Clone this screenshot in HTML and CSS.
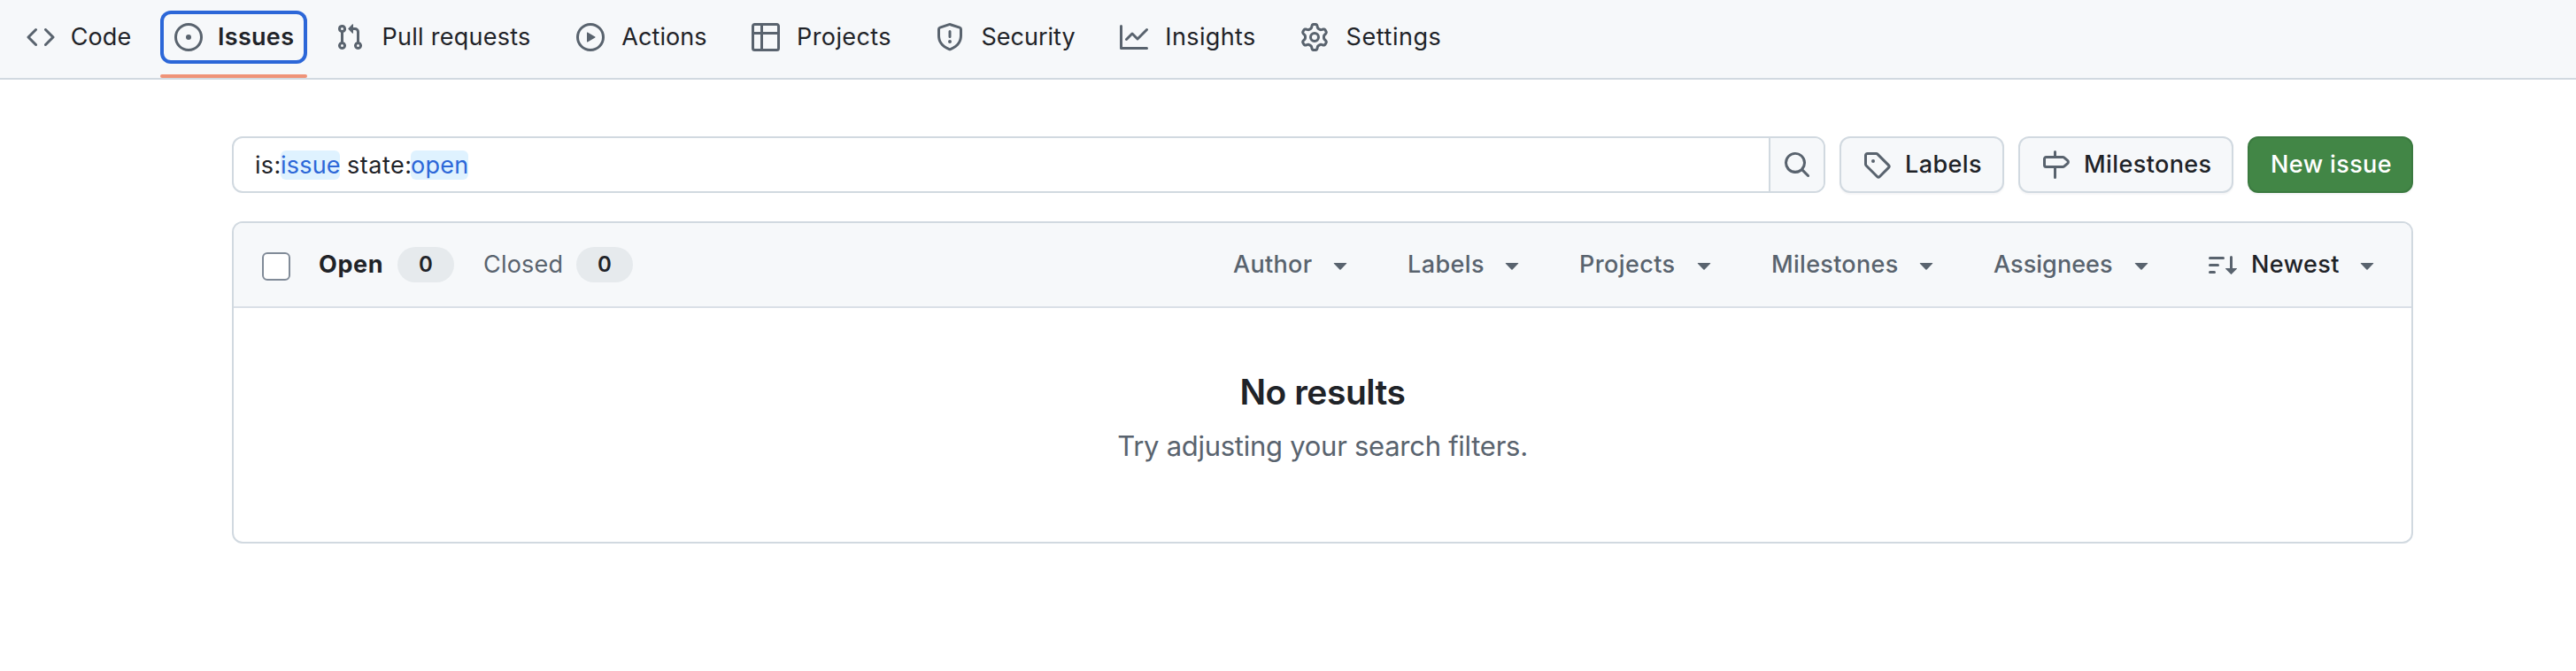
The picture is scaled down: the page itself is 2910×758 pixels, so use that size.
FILE: index.html
```html
<!DOCTYPE html>
<html lang="en">
<head>
<meta charset="utf-8">
<title>Issues</title>
<link rel="stylesheet" href="styles.css">
</head>
<body>
<nav class="repo-nav">
  <a class="tab tab-code"><svg class="icon" viewBox="0 0 16 16"><path d="m11.28 3.22 4.25 4.25a.75.75 0 0 1 0 1.06l-4.25 4.25a.749.749 0 0 1-1.275-.326.749.749 0 0 1 .215-.734L13.94 8l-3.72-3.72a.749.749 0 0 1 .326-1.275.749.749 0 0 1 .734.215Zm-6.56 0a.751.751 0 0 1 1.042.018.751.751 0 0 1 .018 1.042L2.06 8l3.72 3.72a.749.749 0 0 1-.326 1.275.749.749 0 0 1-.734-.215L.47 8.53a.75.75 0 0 1 0-1.06Z"/></svg><span class="tab-label">Code</span></a>
  <a class="tab tab-issues selected"><svg class="icon" viewBox="0 0 16 16"><path d="M8 9.5a1.5 1.5 0 1 0 0-3 1.5 1.5 0 0 0 0 3Z"/><path d="M8 0a8 8 0 1 1 0 16A8 8 0 0 1 8 0ZM1.5 8a6.5 6.5 0 1 0 13 0 6.5 6.5 0 0 0-13 0Z"/></svg><span class="tab-label">Issues</span></a>
  <a class="tab tab-pulls"><svg class="icon" viewBox="0 0 16 16"><path d="M1.5 3.25a2.25 2.25 0 1 1 3 2.122v5.256a2.251 2.251 0 1 1-1.5 0V5.372A2.25 2.25 0 0 1 1.5 3.25Zm5.677-.177L9.573.677A.25.25 0 0 1 10 .854V2.5h1A2.5 2.5 0 0 1 13.5 5v5.628a2.251 2.251 0 1 1-1.5 0V5a1 1 0 0 0-1-1h-1v1.646a.25.25 0 0 1-.427.177L7.177 3.427a.25.25 0 0 1 0-.354ZM3.75 2.5a.75.75 0 1 0 0 1.5.75.75 0 0 0 0-1.5Zm0 9.5a.75.75 0 1 0 0 1.5.75.75 0 0 0 0-1.5Zm8.25.75a.75.75 0 1 0 1.5 0 .75.75 0 0 0-1.5 0Z"/></svg><span class="tab-label">Pull requests</span></a>
  <a class="tab tab-actions"><svg class="icon" viewBox="0 0 16 16"><path d="M8 0a8 8 0 1 1 0 16A8 8 0 0 1 8 0ZM1.5 8a6.5 6.5 0 1 0 13 0 6.5 6.5 0 0 0-13 0Zm4.879-2.773 4.264 2.559a.25.25 0 0 1 0 .428l-4.264 2.559A.25.25 0 0 1 6 10.559V5.442a.25.25 0 0 1 .379-.215Z"/></svg><span class="tab-label">Actions</span></a>
  <a class="tab tab-projects"><svg class="icon" viewBox="0 0 16 16"><path d="M0 1.75C0 .784.784 0 1.75 0h12.5C15.216 0 16 .784 16 1.75v12.5A1.75 1.75 0 0 1 14.25 16H1.75A1.75 1.75 0 0 1 0 14.25ZM6.5 6.5v8h7.75a.25.25 0 0 0 .25-.25V6.5Zm8-1.5V1.75a.25.25 0 0 0-.25-.25H6.5V5Zm-13 1.5v7.75c0 .138.112.25.25.25H5v-8ZM5 5V1.5H1.75a.25.25 0 0 0-.25.25V5Z"/></svg><span class="tab-label">Projects</span></a>
  <a class="tab tab-security"><svg class="icon" viewBox="0 0 16 16"><path d="M7.467.133a1.748 1.748 0 0 1 1.066 0l5.25 1.68A1.75 1.75 0 0 1 15 3.48V7c0 1.566-.32 3.182-1.303 4.682-.983 1.498-2.585 2.813-5.032 3.855a1.697 1.697 0 0 1-1.33 0c-2.447-1.042-4.049-2.357-5.032-3.855C1.32 10.182 1 8.566 1 7V3.48a1.755 1.755 0 0 1 1.217-1.667Zm.61 1.429a.25.25 0 0 0-.153 0l-5.25 1.68a.25.25 0 0 0-.174.238V7c0 1.358.275 2.666 1.057 3.86.784 1.194 2.121 2.34 4.366 3.297a.196.196 0 0 0 .154 0c2.245-.956 3.582-2.104 4.366-3.298C13.225 9.666 13.5 8.36 13.5 7V3.48a.251.251 0 0 0-.174-.237l-5.25-1.68ZM8.75 4.75v3a.75.75 0 0 1-1.5 0v-3a.75.75 0 0 1 1.5 0ZM9 10.5a1 1 0 1 1-2 0 1 1 0 0 1 2 0Z"/></svg><span class="tab-label">Security</span></a>
  <a class="tab tab-insights"><svg class="icon" viewBox="0 0 16 16"><path d="M1.5 1.75V13.5h13.75a.75.75 0 0 1 0 1.5H.75a.75.75 0 0 1-.75-.75V1.75a.75.75 0 0 1 1.5 0Zm14.28 2.53-5.25 5.25a.75.75 0 0 1-1.06 0L7 7.06 4.28 9.78a.751.751 0 0 1-1.042-.018.751.751 0 0 1-.018-1.042l3.25-3.25a.75.75 0 0 1 1.06 0L10 7.94l4.72-4.72a.751.751 0 0 1 1.042.018.751.751 0 0 1 .018 1.042Z"/></svg><span class="tab-label">Insights</span></a>
  <a class="tab tab-settings"><svg class="icon" viewBox="0 0 16 16"><path d="M8 0a8.2 8.2 0 0 1 .701.031C9.444.095 9.99.645 10.16 1.29l.288 1.107c.018.066.079.158.212.224.231.114.454.243.668.386.123.082.233.09.299.071l1.103-.303c.644-.176 1.392.021 1.82.63.27.385.506.792.704 1.218.315.675.111 1.422-.364 1.891l-.814.806c-.049.048-.098.147-.088.294.016.257.016.515 0 .772-.01.147.038.246.088.294l.814.806c.475.469.679 1.216.364 1.891a7.977 7.977 0 0 1-.704 1.217c-.428.61-1.176.807-1.82.63l-1.102-.302c-.067-.019-.177-.011-.3.071a5.909 5.909 0 0 1-.668.386c-.133.066-.194.158-.211.224l-.29 1.106c-.168.646-.715 1.196-1.458 1.26a8.006 8.006 0 0 1-1.402 0c-.743-.064-1.289-.614-1.458-1.26l-.289-1.106c-.018-.066-.079-.158-.212-.224a5.738 5.738 0 0 1-.668-.386c-.123-.082-.233-.09-.299-.071l-1.103.303c-.644.176-1.392-.021-1.82-.63a8.12 8.12 0 0 1-.704-1.218c-.315-.675-.111-1.422.363-1.891l.815-.806c.05-.048.098-.147.088-.294a6.214 6.214 0 0 1 0-.772c.01-.147-.038-.246-.088-.294l-.815-.806C.635 6.045.431 5.298.746 4.623a7.92 7.92 0 0 1 .704-1.217c.428-.61 1.176-.807 1.82-.63l1.102.302c.067.019.177.011.3-.071.214-.143.437-.272.668-.386.133-.066.194-.158.211-.224l.29-1.106C6.009.645 6.556.095 7.299.03 7.53.01 7.764 0 8 0Zm-.571 1.525c-.036.003-.108.036-.137.146l-.289 1.105c-.147.561-.549.967-.998 1.189-.173.086-.34.183-.5.29-.417.278-.97.423-1.529.27l-1.103-.303c-.109-.03-.175.016-.195.045-.22.312-.412.644-.573.99-.014.031-.021.11.059.19l.815.806c.411.406.562.957.53 1.456a4.709 4.709 0 0 0 0 .582c.032.499-.119 1.05-.53 1.456l-.815.806c-.081.08-.073.159-.059.19.162.346.353.677.573.989.02.03.085.076.195.046l1.102-.303c.56-.153 1.113-.008 1.53.27.161.107.328.204.501.29.447.222.85.629.997 1.189l.289 1.105c.029.109.101.143.137.146a6.6 6.6 0 0 0 1.142 0c.036-.003.108-.036.137-.146l.289-1.105c.147-.561.549-.967.998-1.189.173-.086.34-.183.5-.29.417-.278.97-.423 1.529-.27l1.103.303c.109.029.175-.016.195-.045.22-.313.411-.644.573-.99.014-.031.021-.11-.059-.19l-.815-.806c-.411-.406-.562-.957-.53-1.456a4.709 4.709 0 0 0 0-.582c-.032-.499.119-1.05.53-1.456l.815-.806c.081-.08.073-.159.059-.19a6.464 6.464 0 0 0-.573-.989c-.02-.03-.085-.076-.195-.046l-1.102.303c-.56.153-1.113.008-1.53-.27a4.44 4.44 0 0 0-.501-.29c-.447-.222-.85-.629-.997-1.189l-.289-1.105c-.029-.11-.101-.143-.137-.146a6.6 6.6 0 0 0-1.142 0ZM11 8a3 3 0 1 1-6 0 3 3 0 0 1 6 0ZM9.5 8a1.5 1.5 0 1 0-3.001.001A1.5 1.5 0 0 0 9.5 8Z"/></svg><span class="tab-label">Settings</span></a>
</nav>

<main class="content">
  <div class="toolbar">
    <div class="search">
      <div class="query"><span class="q-key key-is">is:</span><span class="q-value value-issue">issue</span><span class="q-key key-state">state:</span><span class="q-value value-open">open</span></div>
      <button class="search-btn" aria-label="Search"><svg class="icon" viewBox="0 0 16 16"><path d="M10.68 11.74a6 6 0 0 1-7.922-8.982 6 6 0 0 1 8.982 7.922l3.04 3.04a.749.749 0 0 1-.326 1.275.749.749 0 0 1-.734-.215ZM11.5 7a4.499 4.499 0 1 0-8.997 0A4.499 4.499 0 0 0 11.5 7Z"/></svg></button>
    </div>
    <button class="btn btn-labels"><svg class="icon" viewBox="0 0 16 16"><path d="M1 7.775V2.75C1 1.784 1.784 1 2.75 1h5.025c.464 0 .91.184 1.238.513l6.25 6.25a1.75 1.75 0 0 1 0 2.474l-5.026 5.026a1.75 1.75 0 0 1-2.474 0l-6.25-6.25A1.752 1.752 0 0 1 1 7.775Zm1.5 0c0 .066.026.13.073.177l6.25 6.25a.25.25 0 0 0 .354 0l5.025-5.025a.25.25 0 0 0 0-.354l-6.25-6.25a.25.25 0 0 0-.177-.073H2.75a.25.25 0 0 0-.25.25ZM6 5a1 1 0 1 1 0 2 1 1 0 0 1 0-2Z"/></svg><span>Labels</span></button>
    <button class="btn btn-milestones"><svg class="icon" viewBox="0 0 16 16"><path d="M7.75 0a.75.75 0 0 1 .75.75V3h3.634c.414 0 .814.147 1.13.414l2.07 1.75a1.75 1.75 0 0 1 0 2.672l-2.07 1.75a1.75 1.75 0 0 1-1.13.414H8.5v5.25a.75.75 0 0 1-1.5 0V10H2.75A1.75 1.75 0 0 1 1 8.25v-3.5C1 3.784 1.784 3 2.75 3H7V.75A.75.75 0 0 1 7.75 0Zm4.384 8.5a.25.25 0 0 0 .161-.06l2.07-1.75a.248.248 0 0 0 0-.38l-2.07-1.75a.25.25 0 0 0-.161-.06H2.75a.25.25 0 0 0-.25.25v3.5c0 .138.112.25.25.25h9.384Z"/></svg><span>Milestones</span></button>
    <button class="btn btn-primary"><span>New issue</span></button>
  </div>

  <section class="list">
    <header class="list-header">
      <span class="checkbox" role="checkbox" aria-checked="false"></span>
      <div class="states">
        <a class="state state-open">Open</a><span class="counter">0</span>
        <a class="state state-closed">Closed</a><span class="counter">0</span>
      </div>
      <div class="filters">
        <button class="filter f-author"><span>Author</span><svg class="icon" viewBox="0 0 16 16"><path d="m4.427 7.427 3.396 3.396a.25.25 0 0 0 .354 0l3.396-3.396A.25.25 0 0 0 11.396 7H4.604a.25.25 0 0 0-.177.427Z"/></svg></button>
        <button class="filter f-labels"><span>Labels</span><svg class="icon" viewBox="0 0 16 16"><path d="m4.427 7.427 3.396 3.396a.25.25 0 0 0 .354 0l3.396-3.396A.25.25 0 0 0 11.396 7H4.604a.25.25 0 0 0-.177.427Z"/></svg></button>
        <button class="filter f-projects"><span>Projects</span><svg class="icon" viewBox="0 0 16 16"><path d="m4.427 7.427 3.396 3.396a.25.25 0 0 0 .354 0l3.396-3.396A.25.25 0 0 0 11.396 7H4.604a.25.25 0 0 0-.177.427Z"/></svg></button>
        <button class="filter f-milestones"><span>Milestones</span><svg class="icon" viewBox="0 0 16 16"><path d="m4.427 7.427 3.396 3.396a.25.25 0 0 0 .354 0l3.396-3.396A.25.25 0 0 0 11.396 7H4.604a.25.25 0 0 0-.177.427Z"/></svg></button>
        <button class="filter f-assignees"><span>Assignees</span><svg class="icon" viewBox="0 0 16 16"><path d="m4.427 7.427 3.396 3.396a.25.25 0 0 0 .354 0l3.396-3.396A.25.25 0 0 0 11.396 7H4.604a.25.25 0 0 0-.177.427Z"/></svg></button>
        <button class="filter f-sort"><svg class="icon sort-icon" viewBox="0 0 16 16"><path d="M0 4.25a.75.75 0 0 1 .75-.75h7.5a.75.75 0 0 1 0 1.5H.75A.75.75 0 0 1 0 4.25Zm0 4a.75.75 0 0 1 .75-.75h4.5a.75.75 0 0 1 0 1.5H.75A.75.75 0 0 1 0 8.25Zm0 4a.75.75 0 0 1 .75-.75h2.5a.75.75 0 0 1 0 1.5H.75a.75.75 0 0 1-.75-.75ZM13.5 10h2.25a.25.25 0 0 1 .177.427l-3 3a.25.25 0 0 1-.354 0l-3-3A.25.25 0 0 1 9.75 10H12V3.75a.75.75 0 0 1 1.5 0V10Z"/></svg><span>Newest</span><svg class="icon caret-end" viewBox="0 0 16 16"><path d="m4.427 7.427 3.396 3.396a.25.25 0 0 0 .354 0l3.396-3.396A.25.25 0 0 0 11.396 7H4.604a.25.25 0 0 0-.177.427Z"/></svg></button>
      </div>
    </header>
    <div class="blank">
      <h2 class="blank-title">No results</h2>
      <p class="blank-text">Try adjusting your search filters.</p>
    </div>
  </section>
</main>
</body>
</html>
```
FILE: styles.css
```css
:root {
  --fg: #1f2328;
  --muted: #59636e;
  --border: #d1d9e0;
  --subtle: #f6f8fa;
}

* { box-sizing: border-box; }

body {
  margin: 0;
  background: #fff;
  color: var(--fg);
  font-family: Inter, "Liberation Sans", sans-serif;
  font-size: 27px;
  line-height: 40px;
  white-space: nowrap;
}

button {
  margin: 0;
  padding: 0;
  border: 0;
  background: none;
  color: inherit;
  font: inherit;
}

.icon {
  display: block;
  flex: none;
  width: 32px;
  height: 32px;
  fill: var(--muted);
}

/* Repository tabs */
.repo-nav {
  display: flex;
  gap: 16px;
  height: 90px;
  padding: 12px 14px 0;
  background: var(--subtle);
  border-bottom: 2px solid var(--border);
}

.tab {
  position: relative;
  display: flex;
  align-items: center;
  gap: 16px;
  height: 60px;
  padding: 0 16px;
  border-radius: 12px;
  letter-spacing: 0.3px;
}

.tab-label {
  flex: 1;
  padding-left: 1px;
  text-align: center;
}

.tab-code { width: 151px; letter-spacing: 0.12px; }
.tab-issues { width: 166px; }
.tab-pulls { width: 256px; letter-spacing: 0.26px; }
.tab-actions { width: 182px; letter-spacing: 0.07px; }
.tab-projects { width: 192px; letter-spacing: 0.4px; }
.tab-security { width: 192px; letter-spacing: 0; }
.tab-insights { width: 188px; letter-spacing: 0.37px; }
.tab-settings { width: 194px; letter-spacing: 0.55px; }

.selected {
  box-shadow: inset 0 0 0 4px #2c67d8;
  font-weight: 600;
}

.selected::after {
  content: "";
  position: absolute;
  left: 0;
  right: 0;
  bottom: -16px;
  height: 4px;
  border-radius: 2px;
  background: #ef9378;
}

/* Search and actions */
.content {
  width: 2464px;
  margin: 64px 0 0 262px;
}

.toolbar {
  display: flex;
  gap: 16px;
  height: 64px;
}

.search {
  display: flex;
  flex: 1;
  border: 2px solid var(--border);
  border-radius: 12px;
  overflow: hidden;
}

.query {
  display: flex;
  align-items: center;
  flex: 1;
  padding-left: 24px;
}

.q-key, .q-value { line-height: 33px; }
.key-is { width: 29px; letter-spacing: 0.3px; }
.key-state { width: 80px; padding-left: 8px; letter-spacing: 0.5px; }

.q-value {
  background: #dff2ff;
  border-radius: 6px;
  color: #2c67d8;
}

.value-issue { width: 67px; letter-spacing: 0.2px; }
.value-open { width: 65px; letter-spacing: 0.3px; }

.search-btn {
  display: flex;
  align-items: center;
  width: 62px;
  padding-left: 14px;
  background: var(--subtle);
  border-left: 2px solid var(--border);
}

.btn {
  display: flex;
  align-items: center;
  gap: 16px;
  padding-left: 24px;
  background: var(--subtle);
  border: 2px solid var(--border);
  border-radius: 12px;
  box-shadow: 0 2px 2px rgba(31, 35, 40, 0.04);
  font-weight: 500;
  letter-spacing: 0.4px;
}

.btn-labels { width: 186px; }
.btn-milestones { width: 243px; }

.btn-primary {
  width: 187px;
  background: #428646;
  border-color: #3b7a40;
  color: #fff;
}

/* Issue list */
.list {
  margin-top: 32px;
  height: 364px;
  border: 2px solid var(--border);
  border-radius: 12px;
  overflow: hidden;
}

.list-header {
  display: flex;
  align-items: center;
  height: 96px;
  padding: 0 34px 0 32px;
  background: var(--subtle);
  border-bottom: 2px solid #dae0e7;
}

.checkbox {
  width: 32px;
  height: 32px;
  margin-top: 4px;
  background: #fff;
  border: 2px solid #818b98;
  border-radius: 6px;
}

.states {
  display: flex;
  align-items: center;
  margin-left: 32px;
}

.state-open { width: 89px; font-weight: 700; letter-spacing: 0.6px; }
.state-closed { width: 106px; margin-left: 32px; padding-left: 1px; color: var(--muted); letter-spacing: 0.2px; }

.counter {
  width: 64px;
  height: 40px;
  border-radius: 20px;
  background: #e6eaed;
  font-size: 24px;
  font-weight: 600;
  text-align: center;
}

.filters {
  display: flex;
  gap: 60px;
  margin-left: auto;
}

.filter {
  display: flex;
  align-items: center;
  justify-content: space-between;
  color: var(--muted);
  font-weight: 500;
  letter-spacing: 0.4px;
}

.f-author { width: 137px; letter-spacing: 0.3px; }
.f-labels { width: 134px; }
.f-projects { width: 157px; }
.f-milestones { width: 191px; letter-spacing: 0.3px; }
.f-assignees { width: 183px; letter-spacing: 0.05px; }
.f-sort { width: 195px; justify-content: flex-start; color: var(--fg); }
.sort-icon { margin-right: 16px; }
.caret-end { margin-left: auto; }

/* Empty state */
.blank {
  padding-top: 65px;
  text-align: center;
}

.blank-title {
  margin: 0;
  font-size: 39px;
  font-weight: 600;
  line-height: 60px;
  letter-spacing: -0.48px;
}

.blank-text {
  margin: 7px 0 0;
  color: var(--muted);
  font-size: 31px;
  line-height: 48px;
  letter-spacing: -0.27px;
}
```
